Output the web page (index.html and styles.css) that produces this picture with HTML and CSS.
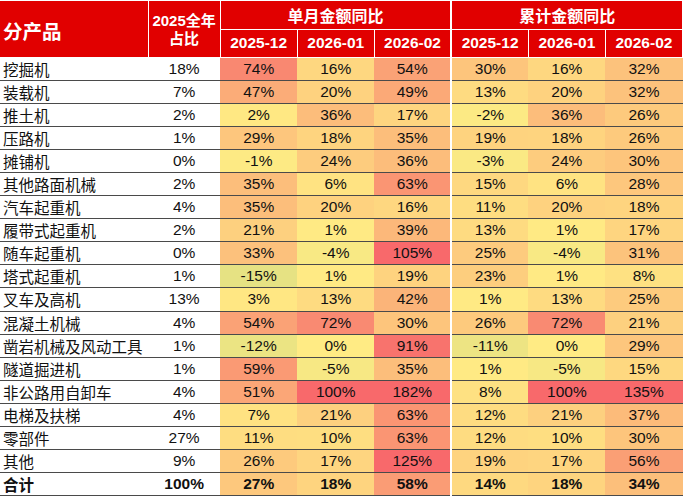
FILE: index.html
```html
<!DOCTYPE html>
<html lang="zh">
<head>
<meta charset="utf-8">
<link rel="stylesheet" href="styles.css">
</head>
<body>
<table class="grid">
  <colgroup>
    <col class="c-name"><col class="c-share">
    <col class="c-val"><col class="c-val"><col class="c-val">
    <col class="c-val"><col class="c-val"><col class="c-val">
  </colgroup>
  <thead>
    <tr class="h1">
      <th rowspan="2" class="th-name">分产品</th>
      <th rowspan="2" class="th-share">2025全年<br>占比</th>
      <th colspan="3" class="th-group">单月金额同比</th>
      <th colspan="3" class="th-group sep">累计金额同比</th>
    </tr>
    <tr class="h2">
      <th>2025-12</th><th>2026-01</th><th>2026-02</th>
      <th class="sep">2025-12</th><th>2026-01</th><th>2026-02</th>
    </tr>
  </thead>
  <tbody>
    <tr><td class="name">挖掘机</td><td class="share">18%</td><td class="v">74%</td><td class="v">16%</td><td class="v">54%</td><td class="v sep">30%</td><td class="v">16%</td><td class="v">32%</td></tr>
    <tr><td class="name">装载机</td><td class="share">7%</td><td class="v">47%</td><td class="v">20%</td><td class="v">49%</td><td class="v sep">13%</td><td class="v">20%</td><td class="v">32%</td></tr>
    <tr><td class="name">推土机</td><td class="share">2%</td><td class="v">2%</td><td class="v">36%</td><td class="v">17%</td><td class="v sep">-2%</td><td class="v">36%</td><td class="v">26%</td></tr>
    <tr><td class="name">压路机</td><td class="share">1%</td><td class="v">29%</td><td class="v">18%</td><td class="v">35%</td><td class="v sep">19%</td><td class="v">18%</td><td class="v">26%</td></tr>
    <tr><td class="name">摊铺机</td><td class="share">0%</td><td class="v">-1%</td><td class="v">24%</td><td class="v">36%</td><td class="v sep">-3%</td><td class="v">24%</td><td class="v">30%</td></tr>
    <tr><td class="name">其他路面机械</td><td class="share">2%</td><td class="v">35%</td><td class="v">6%</td><td class="v">63%</td><td class="v sep">15%</td><td class="v">6%</td><td class="v">28%</td></tr>
    <tr><td class="name">汽车起重机</td><td class="share">4%</td><td class="v">35%</td><td class="v">20%</td><td class="v">16%</td><td class="v sep">11%</td><td class="v">20%</td><td class="v">18%</td></tr>
    <tr><td class="name">履带式起重机</td><td class="share">2%</td><td class="v">21%</td><td class="v">1%</td><td class="v">39%</td><td class="v sep">13%</td><td class="v">1%</td><td class="v">17%</td></tr>
    <tr><td class="name">随车起重机</td><td class="share">0%</td><td class="v">33%</td><td class="v">-4%</td><td class="v">105%</td><td class="v sep">25%</td><td class="v">-4%</td><td class="v">31%</td></tr>
    <tr><td class="name">塔式起重机</td><td class="share">1%</td><td class="v">-15%</td><td class="v">1%</td><td class="v">19%</td><td class="v sep">23%</td><td class="v">1%</td><td class="v">8%</td></tr>
    <tr><td class="name">叉车及高机</td><td class="share">13%</td><td class="v">3%</td><td class="v">13%</td><td class="v">42%</td><td class="v sep">1%</td><td class="v">13%</td><td class="v">25%</td></tr>
    <tr><td class="name">混凝土机械</td><td class="share">4%</td><td class="v">54%</td><td class="v">72%</td><td class="v">30%</td><td class="v sep">26%</td><td class="v">72%</td><td class="v">21%</td></tr>
    <tr><td class="name">凿岩机械及风动工具</td><td class="share">1%</td><td class="v">-12%</td><td class="v">0%</td><td class="v">91%</td><td class="v sep">-11%</td><td class="v">0%</td><td class="v">29%</td></tr>
    <tr><td class="name">隧道掘进机</td><td class="share">1%</td><td class="v">59%</td><td class="v">-5%</td><td class="v">35%</td><td class="v sep">1%</td><td class="v">-5%</td><td class="v">15%</td></tr>
    <tr><td class="name">非公路用自卸车</td><td class="share">4%</td><td class="v">51%</td><td class="v">100%</td><td class="v">182%</td><td class="v sep">8%</td><td class="v">100%</td><td class="v">135%</td></tr>
    <tr><td class="name">电梯及扶梯</td><td class="share">4%</td><td class="v">7%</td><td class="v">21%</td><td class="v">63%</td><td class="v sep">12%</td><td class="v">21%</td><td class="v">37%</td></tr>
    <tr><td class="name">零部件</td><td class="share">27%</td><td class="v">11%</td><td class="v">10%</td><td class="v">63%</td><td class="v sep">12%</td><td class="v">10%</td><td class="v">30%</td></tr>
    <tr><td class="name">其他</td><td class="share">9%</td><td class="v">26%</td><td class="v">17%</td><td class="v">125%</td><td class="v sep">19%</td><td class="v">17%</td><td class="v">56%</td></tr>
    <tr class="total"><td class="name">合计</td><td class="share">100%</td><td class="v">27%</td><td class="v">18%</td><td class="v">58%</td><td class="v sep">14%</td><td class="v">18%</td><td class="v">34%</td></tr>
  </tbody>
</table>
<script src="script.js"></script>
</body>
</html>
```

FILE: styles.css
```css
body {
  margin: 0;
  background: #ffffff;
  font-family: "Liberation Sans", "Noto Sans CJK SC", sans-serif;
  color: #111111;
}

.grid {
  border-collapse: collapse;
  table-layout: fixed;
  width: 683px;
  margin-top: 1px;
}

.c-name { width: 148px; }
.c-share { width: 72px; }
.c-val { width: 77px; }

.grid th {
  background: #e10000;
  color: #ffffff;
  font-weight: bold;
  border: 1px solid #ffffff;
  padding: 0;
  font-size: 15.5px;
  text-align: center;
  white-space: nowrap;
}

.grid thead tr:first-child th {
  border-top: none;
}

.h1 { height: 28px; }
.h2 { height: 28px; }

.grid .th-name {
  border-left: none;
  text-align: left;
  padding-left: 3px;
  padding-top: 4px;
  font-family: "Noto Sans CJK SC", sans-serif;
  font-size: 19.5px;
}

.grid .th-share {
  font-size: 15px;
  line-height: 18px;
  padding-top: 3px;
}

.grid .th-group {
  font-size: 16px;
}

.grid .sep {
  border-left: 2px solid #ffffff;
}

.grid td {
  height: 22.1px;
  padding: 0;
  border-bottom: 1px solid #4a4a4a;
  font-size: 15.5px;
  line-height: 20px;
  text-align: center;
  white-space: nowrap;
}

.grid td.name {
  text-align: left;
  padding-left: 3px;
  font-family: "Noto Sans CJK SC", sans-serif;
  font-size: 15.5px;
}

.total td {
  font-weight: bold;
}
```

FILE: script.js
```js
(function () {
  var stops = [
    [-15, [230, 226, 131]],
    [0, [255, 235, 132]],
    [15, [254, 216, 128]],
    [35, [252, 190, 123]],
    [60, [250, 153, 116]],
    [80, [249, 128, 112]],
    [100, [248, 105, 107]]
  ];
  function color(v) {
    if (v <= stops[0][0]) return stops[0][1];
    if (v >= stops[stops.length - 1][0]) return stops[stops.length - 1][1];
    for (var i = 0; i < stops.length - 1; i++) {
      var a = stops[i], b = stops[i + 1];
      if (v >= a[0] && v <= b[0]) {
        var t = (v - a[0]) / (b[0] - a[0]);
        return [0, 1, 2].map(function (k) {
          return Math.round(a[1][k] + (b[1][k] - a[1][k]) * t);
        });
      }
    }
    return stops[0][1];
  }
  var cells = document.querySelectorAll('td.v');
  for (var i = 0; i < cells.length; i++) {
    var v = parseFloat(cells[i].textContent);
    var c = color(v);
    cells[i].style.backgroundColor = 'rgb(' + c.join(',') + ')';
  }
})();
```
